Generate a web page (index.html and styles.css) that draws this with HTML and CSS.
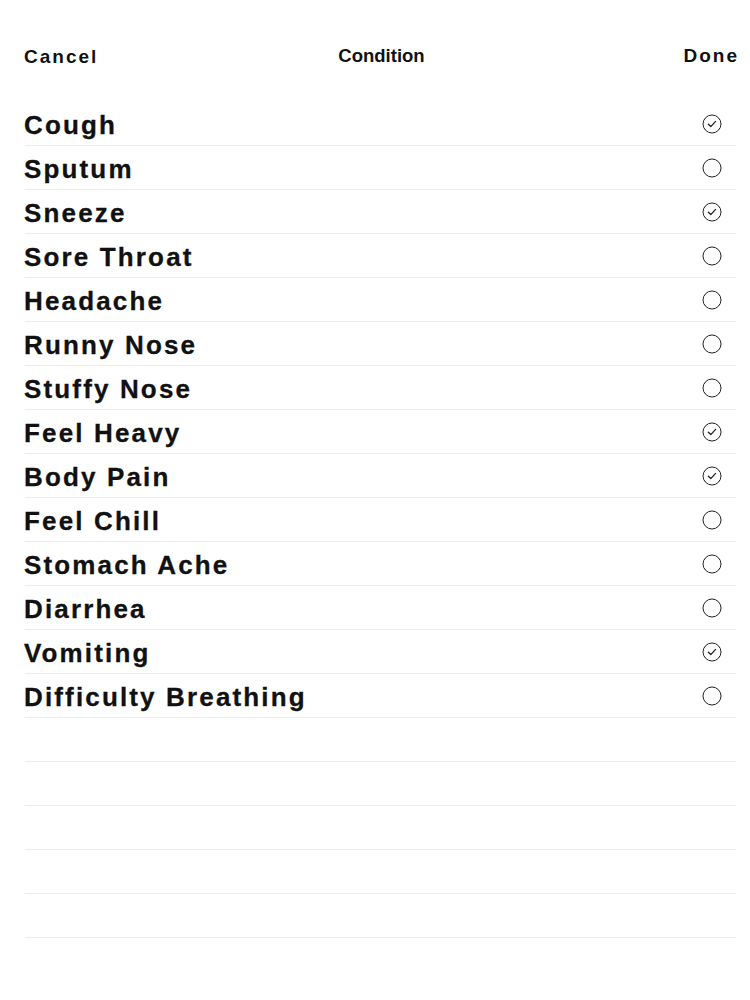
FILE: index.html
```html
<!DOCTYPE html>
<html>
<head>
<meta charset="utf-8">
<link rel="stylesheet" href="styles.css">
</head>
<body>
<header class="bar">
  <span class="btn cancel">Cancel</span>
  <span class="title">Condition</span>
  <span class="btn done">Done</span>
</header>
<ul class="list">
  <li class="row"><span class="label">Cough</span><svg class="mark" viewBox="0 0 20 20"><circle cx="10" cy="10" r="9"/><path d="M6.3 10.3 L8.8 12.6 L13.6 7.4"/></svg></li>
  <li class="row"><span class="label">Sputum</span><svg class="mark" viewBox="0 0 20 20"><circle cx="10" cy="10" r="9"/></svg></li>
  <li class="row"><span class="label">Sneeze</span><svg class="mark" viewBox="0 0 20 20"><circle cx="10" cy="10" r="9"/><path d="M6.3 10.3 L8.8 12.6 L13.6 7.4"/></svg></li>
  <li class="row"><span class="label">Sore Throat</span><svg class="mark" viewBox="0 0 20 20"><circle cx="10" cy="10" r="9"/></svg></li>
  <li class="row"><span class="label">Headache</span><svg class="mark" viewBox="0 0 20 20"><circle cx="10" cy="10" r="9"/></svg></li>
  <li class="row"><span class="label">Runny Nose</span><svg class="mark" viewBox="0 0 20 20"><circle cx="10" cy="10" r="9"/></svg></li>
  <li class="row"><span class="label">Stuffy Nose</span><svg class="mark" viewBox="0 0 20 20"><circle cx="10" cy="10" r="9"/></svg></li>
  <li class="row"><span class="label">Feel Heavy</span><svg class="mark" viewBox="0 0 20 20"><circle cx="10" cy="10" r="9"/><path d="M6.3 10.3 L8.8 12.6 L13.6 7.4"/></svg></li>
  <li class="row"><span class="label">Body Pain</span><svg class="mark" viewBox="0 0 20 20"><circle cx="10" cy="10" r="9"/><path d="M6.3 10.3 L8.8 12.6 L13.6 7.4"/></svg></li>
  <li class="row"><span class="label">Feel Chill</span><svg class="mark" viewBox="0 0 20 20"><circle cx="10" cy="10" r="9"/></svg></li>
  <li class="row"><span class="label">Stomach Ache</span><svg class="mark" viewBox="0 0 20 20"><circle cx="10" cy="10" r="9"/></svg></li>
  <li class="row"><span class="label">Diarrhea</span><svg class="mark" viewBox="0 0 20 20"><circle cx="10" cy="10" r="9"/></svg></li>
  <li class="row"><span class="label">Vomiting</span><svg class="mark" viewBox="0 0 20 20"><circle cx="10" cy="10" r="9"/><path d="M6.3 10.3 L8.8 12.6 L13.6 7.4"/></svg></li>
  <li class="row"><span class="label">Difficulty Breathing</span><svg class="mark" viewBox="0 0 20 20"><circle cx="10" cy="10" r="9"/></svg></li>
  <li class="row empty"></li>
  <li class="row empty"></li>
  <li class="row empty"></li>
  <li class="row empty"></li>
  <li class="row empty"></li>
</ul>
</body>
</html>
```
FILE: styles.css
```css
html, body {
  margin: 0;
  padding: 0;
  background: #ffffff;
}
body {
  font-family: "Liberation Sans", Arial, sans-serif;
  color: #111111;
}
.bar {
  display: grid;
  grid-template-columns: 1fr auto 1fr;
  align-items: center;
  padding: 44px 11px 0 24px;
  height: 22px;
}
.btn {
  font-size: 19px;
  font-weight: bold;
  letter-spacing: 2px;
  line-height: 22px;
}
.cancel {
  justify-self: start;
  padding-top: 2px;
}
.done {
  justify-self: end;
}
.title {
  font-size: 18.5px;
  font-weight: bold;
  line-height: 22px;
}
.list {
  list-style: none;
  margin: 36px 14px 0 25px;
  padding: 0;
}
.row {
  display: flex;
  align-items: center;
  justify-content: space-between;
  height: 43px;
  border-bottom: 1px solid #ececec;
}
.label {
  font-size: 26px;
  font-weight: bold;
  letter-spacing: 2.15px;
  margin-left: -1px;
  padding-top: 3px;
  -webkit-text-stroke: 0.3px #111111;
}
.mark {
  width: 20px;
  height: 20px;
  margin-right: 14px;
  fill: none;
  stroke: #222222;
  stroke-width: 1;
}
.mark path {
  stroke-width: 1.3;
  stroke-linecap: round;
  stroke-linejoin: round;
}
```
